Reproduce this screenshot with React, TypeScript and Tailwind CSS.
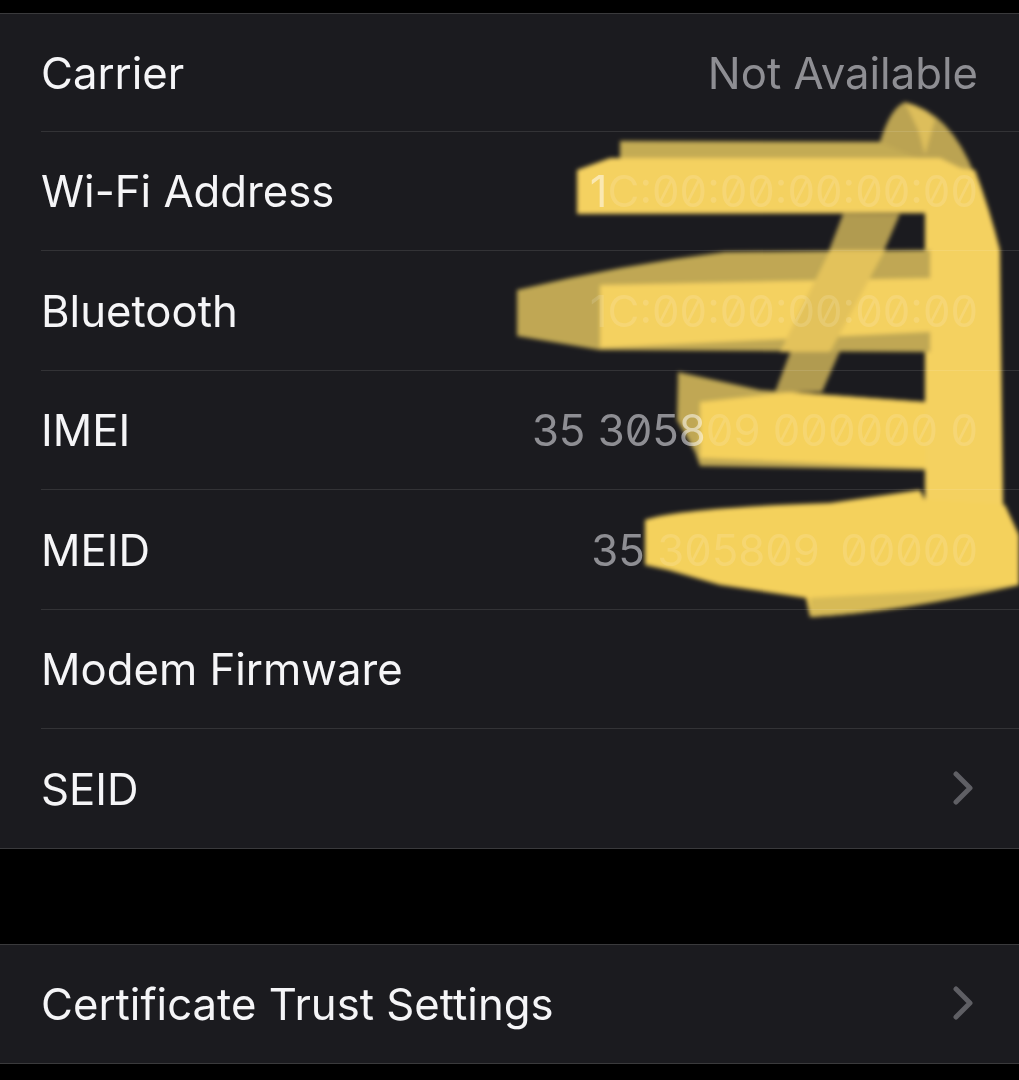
import React from 'react';

interface RowProps {
  label: string;
  value?: string;
  faint?: string;
  chevron?: boolean;
}

const Chevron = () => (
  <svg width="24" height="36" viewBox="0 0 24 36" fill="none" className="absolute right-[44px] top-1/2 -translate-y-1/2">
    <path d="M5 3 L19 17 L5 31" stroke="#5f5f64" strokeWidth="5" strokeLinecap="round" strokeLinejoin="round" />
  </svg>
);

const Row: React.FC<RowProps> = ({ label, value, faint, chevron }) => (
  <div className="relative ml-[41px] flex h-[119.4px] items-center justify-between border-b border-[#333336] pt-[2px] pr-[41px] first:h-[118px] last:border-b-0">
    <span className="text-[#f5f5f7]">{label}</span>
    {(value || faint) && (
      <span className="slashed-zero text-[#8e8e93]">
        {value}
        {faint && <span className="opacity-25">{faint}</span>}
      </span>
    )}
    {chevron && <Chevron />}
  </div>
);

// marker scribble over the identifiers; screen blend lets the text show through faintly
const Scribble = () => (
  <svg
    width="1019"
    height="1080"
    viewBox="0 0 1019 1080"
    className="absolute left-0 top-0 blur-[2px] mix-blend-screen"
  >
    <path d="M620 141 L932 142 L932 165 L620 165 Z" fill="#bca13c" />
    <path d="M880 142 Q890 108 905 102 Q950 112 975 175 L945 170 Z" fill="#b3983a" />
    <path d="M905 103 Q925 108 935 120 L925 155 L918 130 Z" fill="#d9b644" />
    <path d="M935 165 L975 170 Q990 210 1000 250 L1003 500 L1005 570 L960 590 L925 500 L925 210 Z" fill="#f3cb4a" />
    <path d="M843 214 L900 214 L822 392 L775 392 Z" fill="#a88f38" />
    <path d="M577 170 L610 158 L940 158 L975 175 L980 213 L577 214 Z" fill="#f3cb4a" />
    <path d="M517 290 Q620 265 725 252 L930 250 L930 352 L600 350 L517 336 Z" fill="#b89d3c" />
    <path d="M600 285 L830 280 L930 278 L930 332 L600 348 Z" fill="#f3cb4a" />
    <path d="M830 250 L885 250 L830 352 L780 352 Z" fill="#e0bb44" />
    <path d="M678 372 L760 390 L925 402 L925 470 L700 466 L695 452 L677 420 Z" fill="#b89d3c" />
    <path d="M700 402 L790 392 L925 402 L925 468 L700 458 Z" fill="#f4cb45" />
    <path d="M645 520 Q680 508 830 503 L920 490 L925 500 L1005 505 L1019 535 L1019 585 Q900 612 810 617 L806 598 L720 585 L668 570 L645 565 Z" fill="#f3cb45" />
    <path d="M810 598 L950 590 L1019 585 Q900 612 810 617 Z" fill="#d2b23f" />
  </svg>
);

export default function App() {
  return (
    <div
      className="relative h-[1080px] overflow-hidden bg-black pt-[13px] text-[43.7px] leading-none"
      style={{ fontFamily: 'Inter, "Liberation Sans", sans-serif' }}
    >
      <section className="border-y border-[#3a3a3c] bg-[#1b1b1f]">
        <Row label="Carrier" value="Not Available" />
        <Row label="Wi-Fi Address" value="1" faint="C:00:00:00:00:00" />
        <Row label="Bluetooth" faint="1C:00:00:00:00:00" />
        <Row label="IMEI" value="35 3058" faint="09 000000 0" />
        <Row label="MEID" value="35" faint={' 305809\u2009 00000'} />
        <Row label="Modem Firmware" />
        <Row label="SEID" chevron />
      </section>
      <section className="mt-[95px] border-y border-[#3a3a3c] bg-[#1b1b1f]">
        <Row label="Certificate Trust Settings" chevron />
      </section>
      <Scribble />
    </div>
  );
}
